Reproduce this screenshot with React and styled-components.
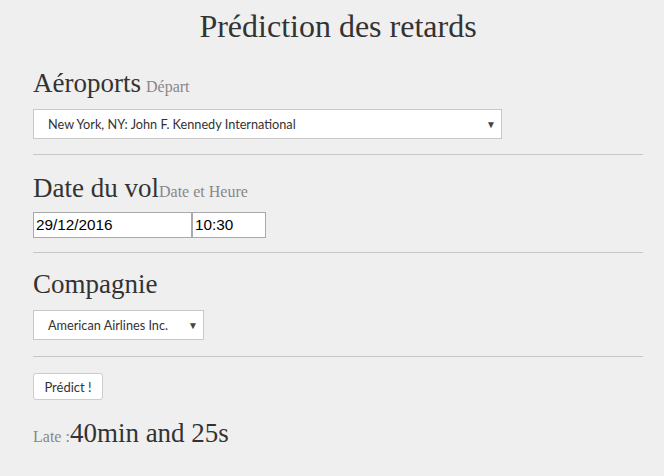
import React from "react";
import styled, { createGlobalStyle } from "styled-components";

const GlobalStyle = createGlobalStyle`
  body {
    margin: 0;
    background-color: #efefef;
    font-family: "Liberation Serif", "Times New Roman", serif;
    color: #333333;
  }
`;

const Page = styled.div`
  width: 610px;
  margin-left: 33px;
`;

const Title = styled.h1`
  margin: 8px 0 0 0;
  font-size: 32px;
  line-height: 36px;
  font-weight: normal;
  text-align: center;
  color: #333333;
`;

const Section = styled.div`
  padding-top: ${(p) => p.$top || 0}px;
`;

const Heading = styled.h2`
  margin: 0;
  font-size: 27px;
  line-height: 30px;
  font-weight: normal;
  color: #333333;

  > small {
    font-size: 16px;
    line-height: 16px;
    color: #888888;
    margin-left: ${(p) => (p.$gap ? "5px" : "0")};
  }
`;

const Select = styled.div`
  box-sizing: border-box;
  width: ${(p) => p.$width}px;
  height: 30px;
  margin-top: ${(p) => p.$top}px;
  background-color: #ffffff;
  border: 1px solid #c8c8c8;
  display: flex;
  align-items: center;
  justify-content: space-between;
  padding: 0 5px 0 14px;
  font-family: Lato, "Liberation Sans", sans-serif;
  font-size: 12.7px;
  color: #333333;

  > span:nth-of-type(2) {
    font-size: 10px;
    color: #444444;
  }
`;

const InputRow = styled.div`
  display: flex;
  margin-top: ${(p) => p.$top}px;
`;

const Input = styled.div`
  box-sizing: border-box;
  width: ${(p) => p.$width}px;
  height: 26px;
  background-color: #ffffff;
  border: 1px solid #a9a9a9;
  display: flex;
  align-items: center;
  padding-left: 2px;
  font-family: "Liberation Sans", Arial, sans-serif;
  font-size: 15.3px;
  color: #000000;
`;

const Rule = styled.hr`
  border: none;
  border-top: 1px solid #c6c6c6;
  margin: ${(p) => p.$top}px 0 0 0;
`;

const Button = styled.button`
  box-sizing: border-box;
  margin-top: 16px;
  width: 70px;
  height: 27px;
  background-color: #ffffff;
  border: 1px solid #cccccc;
  border-radius: 3px;
  font-family: Lato, "Liberation Sans", sans-serif;
  font-size: 13px;
  font-weight: normal;
  color: #333333;
  padding: 0;
`;

const Result = styled.div`
  margin-top: 18px;
  font-size: 27px;
  line-height: 30px;
  color: #333333;

  > small {
    font-size: 16px;
    line-height: 16px;
    color: #888888;
  }
`;

export default function App() {
  return (
    <>
      <GlobalStyle />
      <Page>
        <Title>Prédiction des retards</Title>

        <Section $top={24}>
          <Heading $gap>
            Aéroports<small>Départ</small>
          </Heading>
          <Select $width={469} $top={11}>
            <span>New York, NY: John F. Kennedy International</span>
            <span>▼</span>
          </Select>
        </Section>
        <Rule $top={15} />

        <Section $top={18}>
          <Heading>
            Date du vol<small>Date et Heure</small>
          </Heading>
          <InputRow $top={9}>
            <Input $width={159}>29/12/2016</Input>
            <Input $width={74}>10:30</Input>
          </InputRow>
        </Section>
        <Rule $top={14} />

        <Section $top={16}>
          <Heading>Compagnie</Heading>
          <Select $width={171} $top={11}>
            <span>American Airlines Inc.</span>
            <span>▼</span>
          </Select>
        </Section>
        <Rule $top={16} />

        <Button>Prédict !</Button>

        <Result>
          <small>Late :</small>40min and 25s
        </Result>
      </Page>
    </>
  );
}
